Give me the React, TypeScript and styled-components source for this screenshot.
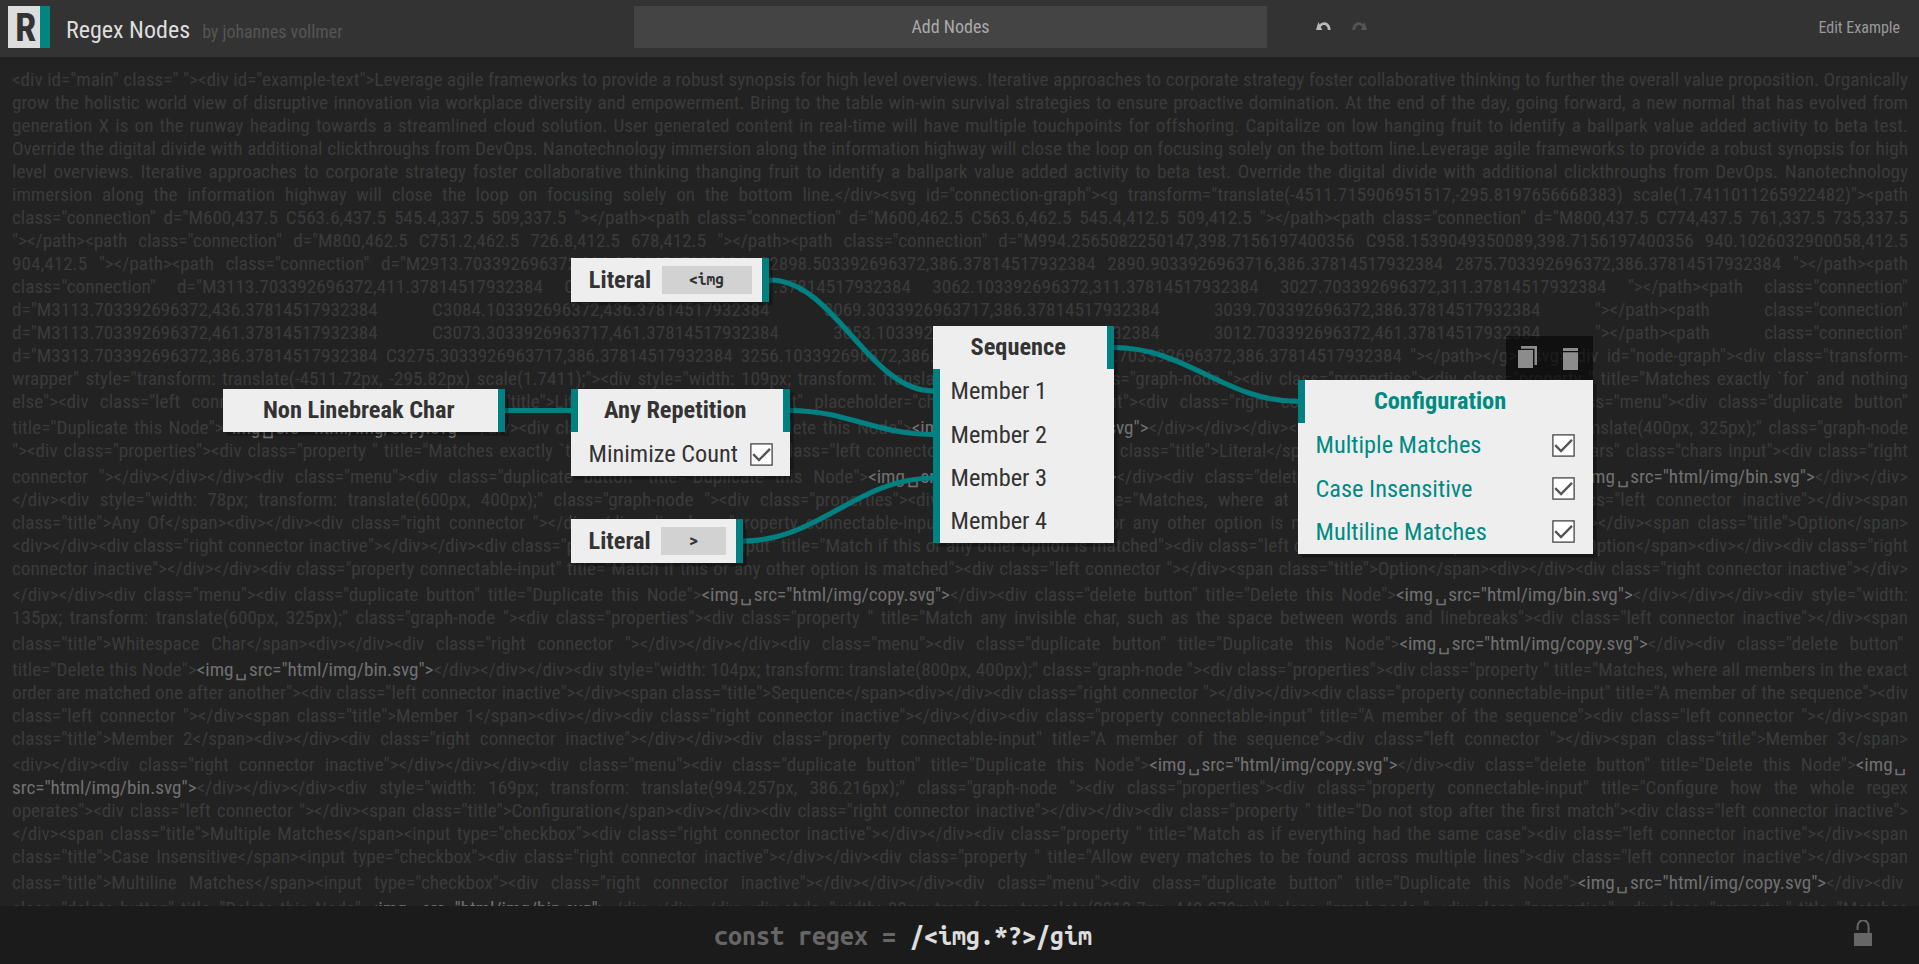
import React from "react";
import styled, { createGlobalStyle, css } from "styled-components";

const GlobalStyle = createGlobalStyle`
  * { box-sizing: border-box; }
  body {
    margin: 0;
    overflow: hidden;
    background: #222;
    font-family: "Roboto Condensed", Roboto, sans-serif;
  }
`;

const TEAL = "#008080";
const ROW = 43.4;

const Page = styled.div`
  display: flex;
  flex-direction: column;
  height: 964px;
`;

/* ---------- header ---------- */

const Header = styled.header`
  display: flex;
  flex: none;
  height: 57px;
  padding: 6px 19px 9px 8px;
  background: #333;
`;

const Brand = styled.div`
  display: flex;
  width: 626px;
`;

const Logo = styled.div`
  width: 42px;
  height: 42px;
  padding-left: 3px;
  border-right: 10px solid #00857f;
  background: #ddd;
  color: #333;
  font-size: 38.4px;
  font-weight: 700;
  line-height: 43px;
  text-align: center;
`;

const AppName = styled.h1`
  margin: 0 0 0 16px;
  color: #ddd;
  font-size: 24px;
  font-weight: 400;
  line-height: 49px;
`;

const Author = styled.span`
  margin-left: 12px;
  color: #555;
  font-size: 17.9px;
  line-height: 51px;
`;

const AddNodes = styled.button`
  width: 633px;
  height: 42px;
  padding: 0 0 1px;
  border: 0;
  background: #444;
  color: #aaa;
  font: 400 18px "Roboto Condensed", sans-serif;
`;

const History = styled.div`
  display: flex;
  flex: 1;
  gap: 21px;
  padding: 16px 0 0 49px;
`;

const EditExample = styled.span`
  color: #999;
  font-size: 16px;
  line-height: 43px;
`;

/* ---------- example text ---------- */

const Stage = styled.main`
  position: relative;
  flex: 1;
  min-height: 0;
  overflow: hidden;
  padding: 11px 11px 0 12px;
`;

const Line = styled.div<{ $tall: boolean; $short: boolean }>`
  height: ${(p) => (p.$tall ? 26 : 23)}px;
  padding-top: ${(p) => (p.$tall ? 3 : 0)}px;
  padding-right: ${(p) => (p.$short ? 4.5 : 0)}px;
  color: #3b3b3b;
  font-size: 19.2px;
  line-height: 23px;
  text-align: justify;
  text-align-last: justify;
  white-space: nowrap;
`;

const Match = styled.span`
  display: inline-block;
  color: #717171;
  text-align: left;
  text-align-last: left;
`;

const Blank = styled.span`
  padding: 0 1.7px;
`;

/* ---------- graph ---------- */

const Connections = styled.svg`
  position: absolute;
  inset: 0;
  width: 100%;
  height: 100%;
  fill: none;
  stroke: ${TEAL};
  stroke-width: 5.2px;
`;

const Node = styled.section<{ $x: number; $y: number; $w: number; $accent?: boolean }>`
  position: absolute;
  left: ${(p) => p.$x}px;
  top: ${(p) => p.$y}px;
  width: ${(p) => p.$w}px;
  background: #eee;
  box-shadow: 3.5px 3.5px 0 rgba(0, 0, 0, 0.3);
  color: ${(p) => (p.$accent ? "#008a84" : "#333")};
`;

const Property = styled.div<{ $left?: boolean; $right?: boolean; $center?: boolean }>`
  display: flex;
  align-items: center;
  justify-content: ${(p) => (p.$center ? "center" : "space-between")};
  height: ${ROW}px;
  padding: 0 17.5px;
  font-size: 24.35px;
  ${(p) => p.$left && css`border-left: 7px solid ${TEAL}; padding-left: 10.5px;`}
  ${(p) => p.$right && css`border-right: 7px solid ${TEAL}; padding-right: 10.5px;`}
`;

const Label = styled.span`
  padding-bottom: 0.6px;
`;

const Title = styled.span<{ $low?: boolean }>`
  margin-right: 10.5px;
  padding-bottom: ${(p) => (p.$low ? 0.6 : 2)}px;
  font-weight: 700;
`;

const Chars = styled.span<{ $w: number }>`
  width: ${(p) => p.$w}px;
  height: 28px;
  background: #d2d2d2;
  font: 700 15.6px/27px "Ubuntu Mono", monospace;
  text-align: center;
`;

const Box = styled.svg`
  display: block;
  width: 23px;
  height: 23px;
`;

const Menu = styled.div`
  position: absolute;
  left: 1506px;
  top: 279px;
  display: flex;
  gap: 26px;
  width: 87px;
  height: 44px;
  padding: 10px 12px;
  background: rgba(0, 0, 0, 0.52);
`;

const MenuIcon = styled.svg`
  flex: none;
  fill: #8c8c8c;
`;

/* ---------- footer ---------- */

const Footer = styled.footer`
  display: flex;
  flex: none;
  height: 58px;
  background: #1b1b1b;
`;

const Code = styled.code`
  flex: 1;
  color: #666;
  font: 700 25px/60px "Ubuntu Mono", monospace;
  text-align: center;
  white-space: pre;
`;

const Regex = styled.span`
  color: #ddd;
`;

const LockButton = styled.div`
  width: 113px;
  padding: 14px 0 0 48px;
`;

const LINES = [
  `<div id="main" class=" "><div id="example-text">Leverage agile frameworks to provide a robust synopsis for high level overviews. Iterative approaches to corporate strategy foster collaborative thinking to further the overall value proposition. Organically`,
  `grow the holistic world view of disruptive innovation via workplace diversity and empowerment. Bring to the table win-win survival strategies to ensure proactive domination. At the end of the day, going forward, a new normal that has evolved from`,
  `generation X is on the runway heading towards a streamlined cloud solution. User generated content in real-time will have multiple touchpoints for offshoring. Capitalize on low hanging fruit to identify a ballpark value added activity to beta test.`,
  `Override the digital divide with additional clickthroughs from DevOps. Nanotechnology immersion along the information highway will close the loop on focusing solely on the bottom line.Leverage agile frameworks to provide a robust synopsis for high`,
  `level overviews. Iterative approaches to corporate strategy foster collaborative thinking thanging fruit to identify a ballpark value added activity to beta test. Override the digital divide with additional clickthroughs from DevOps. Nanotechnology`,
  `immersion along the information highway will close the loop on focusing solely on the bottom line.</div><svg id="connection-graph"><g transform="translate(-4511.715906951517,-295.8197656668383) scale(1.7411011265922482)"><path`,
  `class="connection" d="M600,437.5 C563.6,437.5 545.4,337.5 509,337.5 "></path><path class="connection" d="M600,462.5 C563.6,462.5 545.4,412.5 509,412.5 "></path><path class="connection" d="M800,437.5 C774,437.5 761,337.5 735,337.5`,
  `"></path><path class="connection" d="M800,462.5 C751.2,462.5 726.8,412.5 678,412.5 "></path><path class="connection" d="M994.2565082250147,398.7156197400356 C958.1539049350089,398.7156197400356 940.1026032900058,412.5`,
  `904,412.5 "></path><path class="connection" d="M2913.703392696372,386.37814517932384 C2898.503392696372,386.37814517932384 2890.9033926963716,386.37814517932384 2875.703392696372,386.37814517932384 "></path><path`,
  `class="connection" d="M3113.703392696372,411.37814517932384 C3079.3033926963717,411.37814517932384 3062.103392696372,311.37814517932384 3027.703392696372,311.37814517932384 "></path><path class="connection"`,
  `d="M3113.703392696372,436.37814517932384 C3084.103392696372,436.37814517932384 3069.3033926963717,386.37814517932384 3039.703392696372,386.37814517932384 "></path><path class="connection"`,
  `d="M3113.703392696372,461.37814517932384 C3073.3033926963717,461.37814517932384 3053.103392696372,461.37814517932384 3012.703392696372,461.37814517932384 "></path><path class="connection"`,
  `d="M3313.703392696372,386.37814517932384 C3275.3033926963717,386.37814517932384 3256.103392696372,386.37814517932384 3217.703392696372,386.37814517932384 "></path></g></svg><div id="node-graph"><div class="transform-`,
  `wrapper" style="transform: translate(-4511.72px, -295.82px) scale(1.7411);"><div style="width: 109px; transform: translate(400px, 400px);" class="graph-node "><div class="properties"><div class="property " title="Matches exactly \`for\` and nothing`,
  `else"><div class="left connector inactive"></div><span class="title">Literal</span><input type="text" placeholder="chars" class="chars input"><div class="right connector "></div></div></div><div class="menu"><div class="duplicate button"`,
  `title="Duplicate this Node">{<img␣src="html/img/copy.svg">}</div><div class="delete button" title="Delete this Node">{<img␣src="html/img/bin.svg">}</div></div></div><div style="width: 109px; transform: translate(400px, 325px);" class="graph-node`,
  `"><div class="properties"><div class="property " title="Matches exactly \`the\` and nothing else"><div class="left connector inactive"></div><span class="title">Literal</span><input type="text" placeholder="chars" class="chars input"><div class="right`,
  `connector "></div></div></div><div class="menu"><div class="duplicate button" title="Duplicate this Node">{<img␣src="html/img/copy.svg">}</div><div class="delete button" title="Delete this Node">{<img␣src="html/img/bin.svg">}</div></div>`,
  `</div><div style="width: 78px; transform: translate(600px, 400px);" class="graph-node "><div class="properties"><div class="property " title="Matches, where at least one option matches"><div class="left connector inactive"></div><span`,
  `class="title">Any Of</span><div></div><div class="right connector "></div></div><div class="property connectable-input" title="Match if this or any other option is matched"><div class="left connector "></div><span class="title">Option</span>`,
  `<div></div><div class="right connector inactive"></div></div><div class="property connectable-input" title="Match if this or any other option is matched"><div class="left connector "></div><span class="title">Option</span><div></div><div class="right`,
  `connector inactive"></div></div><div class="property connectable-input" title="Match if this or any other option is matched"><div class="left connector "></div><span class="title">Option</span><div></div><div class="right connector inactive"></div>`,
  `</div></div><div class="menu"><div class="duplicate button" title="Duplicate this Node">{<img␣src="html/img/copy.svg">}</div><div class="delete button" title="Delete this Node">{<img␣src="html/img/bin.svg">}</div></div></div><div style="width:`,
  `135px; transform: translate(600px, 325px);" class="graph-node "><div class="properties"><div class="property " title="Match any invisible char, such as the space between words and linebreaks"><div class="left connector inactive"></div><span`,
  `class="title">Whitespace Char</span><div></div><div class="right connector "></div></div></div><div class="menu"><div class="duplicate button" title="Duplicate this Node">{<img␣src="html/img/copy.svg">}</div><div class="delete button"`,
  `title="Delete this Node">{<img␣src="html/img/bin.svg">}</div></div></div><div style="width: 104px; transform: translate(800px, 400px);" class="graph-node "><div class="properties"><div class="property " title="Matches, where all members in the exact`,
  `order are matched one after another"><div class="left connector inactive"></div><span class="title">Sequence</span><div></div><div class="right connector "></div></div><div class="property connectable-input" title="A member of the sequence"><div`,
  `class="left connector "></div><span class="title">Member 1</span><div></div><div class="right connector inactive"></div></div><div class="property connectable-input" title="A member of the sequence"><div class="left connector "></div><span`,
  `class="title">Member 2</span><div></div><div class="right connector inactive"></div></div><div class="property connectable-input" title="A member of the sequence"><div class="left connector "></div><span class="title">Member 3</span>`,
  `<div></div><div class="right connector inactive"></div></div></div><div class="menu"><div class="duplicate button" title="Duplicate this Node">{<img␣src="html/img/copy.svg">}</div><div class="delete button" title="Delete this Node">{<img␣}`,
  `{src="html/img/bin.svg">}</div></div></div><div style="width: 169px; transform: translate(994.257px, 386.216px);" class="graph-node "><div class="properties"><div class="property connectable-input" title="Configure how the whole regex`,
  `operates"><div class="left connector "></div><span class="title">Configuration</span><div></div><div class="right connector inactive"></div></div><div class="property " title="Do not stop after the first match"><div class="left connector inactive">`,
  `</div><span class="title">Multiple Matches</span><input type="checkbox"><div class="right connector inactive"></div></div><div class="property " title="Match as if everything had the same case"><div class="left connector inactive"></div><span`,
  `class="title">Case Insensitive</span><input type="checkbox"><div class="right connector inactive"></div></div><div class="property " title="Allow every matches to be found across multiple lines"><div class="left connector inactive"></div><span`,
  `class="title">Multiline Matches</span><input type="checkbox"><div class="right connector inactive"></div></div></div><div class="menu"><div class="duplicate button" title="Duplicate this Node">{<img␣src="html/img/copy.svg">}</div><div`,
  `class="delete button" title="Delete this Node">{<img␣src="html/img/bin.svg">}</div></div></div><div style="width: 80px; transform: translate(2913.7px, 448.878px);" class="graph-node "><div class="properties"><div class="property " title="Matches`,
];

/* Lines whose last visible glyph stops a little before the right margin. */
const SHORT_LINES = [24, 34];

const MatchText = ({ text }: { text: string }) => {
  const [head, tail] = text.split("␣");
  return (
    <Match>
      {head}
      {tail !== undefined && <Blank>␣</Blank>}
      {tail}
    </Match>
  );
};

/* Braces mark the parts that the regex matches. */
const ExampleLine = ({ text, short }: { text: string; short: boolean }) => (
  <Line $tall={text.includes("␣")} $short={short}>
    {text.split(/(\{[^}]*\})/).map((part, i) =>
      part.startsWith("{") ? <MatchText key={i} text={part.slice(1, -1)} /> : part,
    )}
  </Line>
);

const Checkbox = () => (
  <Box viewBox="0 0 23 23">
    <rect x="0.9" y="0.9" width="21.2" height="21.2" fill="#fff" stroke="#444" strokeWidth="1.3" />
    <path d="M3.2 11.2 9 17 20 5.8" fill="none" stroke="#555" strokeWidth="2.4" />
  </Box>
);

const Arrow = ({ flip, color }: { flip?: boolean; color: string }) => (
  <svg width="15" height="8" viewBox="0 0 15 8">
    <g transform={flip ? "matrix(-1 0 0 1 15 0)" : undefined}>
      <path d="M0 8 2.4 0 6.2 8Z" fill={color} />
      <path d="M3.6 4.4C5 1.4 9 1 11 2.6 12.6 3.8 13.2 5.4 13.2 8" fill="none" stroke={color} strokeWidth="2.7" />
    </g>
  </svg>
);

const Option = ({ label }: { label: string }) => (
  <Property>
    <Label>{label}</Label>
    <Checkbox />
  </Property>
);

export default function App() {
  return (
    <Page>
      <GlobalStyle />
      <Header>
        <Brand>
          <Logo>R</Logo>
          <AppName>Regex Nodes</AppName>
          <Author>by johannes vollmer</Author>
        </Brand>
        <AddNodes>Add Nodes</AddNodes>
        <History>
          <Arrow color="#bbb" />
          <Arrow color="#555" flip />
        </History>
        <EditExample>Edit Example</EditExample>
      </Header>

      <Stage>
        {LINES.map((text, i) => (
          <ExampleLine key={i} text={text} short={SHORT_LINES.includes(i)} />
        ))}

        <Connections>
          <path d="M769.5 223C835 223 868 334 933.5 334" />
          <path d="M504.5 353.5H571.5" />
          <path d="M789.5 353.5C847 353.5 876 377.5 933.5 377.5" />
          <path d="M743 484C819 484 857 421 933.5 421" />
          <path d="M1113.5 290.5C1187.5 290.5 1224.5 344.5 1298.5 344.5" />
        </Connections>

        <Node $x={571} $y={201.2} $w={198.4}>
          <Property $center $right>
            <Title $low>Literal</Title>
            <Chars $w={90}>&lt;img</Chars>
          </Property>
        </Node>
        <Node $x={223} $y={332} $w={282}>
          <Property $center $right><Title>Non Linebreak Char</Title></Property>
        </Node>
        <Node $x={571} $y={332} $w={219}>
          <Property $center $left $right><Title>Any Repetition</Title></Property>
          <Option label="Minimize Count" />
        </Node>
        <Node $x={571} $y={462.2} $w={172.3}>
          <Property $center $right>
            <Title $low>Literal</Title>
            <Chars $w={65}>&gt;</Chars>
          </Property>
        </Node>
        <Node $x={933} $y={269} $w={181}>
          <Property $center $right><Title>Sequence</Title></Property>
          <Property $left><Label>Member 1</Label></Property>
          <Property $left><Label>Member 2</Label></Property>
          <Property $left><Label>Member 3</Label></Property>
          <Property $left><Label>Member 4</Label></Property>
        </Node>
        <Node $x={1298} $y={323} $w={294.6} $accent>
          <Property $center $left><Title>Configuration</Title></Property>
          <Option label="Multiple Matches" />
          <Option label="Case Insensitive" />
          <Option label="Multiline Matches" />
        </Node>
        <Menu>
          <MenuIcon width="19" height="22" viewBox="0 0 19 22">
            <path d="M0 4H15V22H0ZM3 0H19V19H16.5V2.7H3Z" />
          </MenuIcon>
          <MenuIcon width="15" height="24" viewBox="0 0 15 24">
            <path d="M0 2H15V5H0ZM0 6.3H15V24H0Z" />
          </MenuIcon>
        </Menu>
      </Stage>

      <Footer>
        <Code>const regex = <Regex>/&lt;img.*?&gt;/gim</Regex></Code>
        <LockButton>
          <svg width="18" height="26" viewBox="0 0 18 26">
            <path d="M0 13H18V26H0Z" fill="#666" />
            <path d="M3.6 10V6.5A4.2 4.8 0 0 1 14.6 6.5V13" fill="none" stroke="#666" strokeWidth="2" />
          </svg>
        </LockButton>
      </Footer>
    </Page>
  );
}
